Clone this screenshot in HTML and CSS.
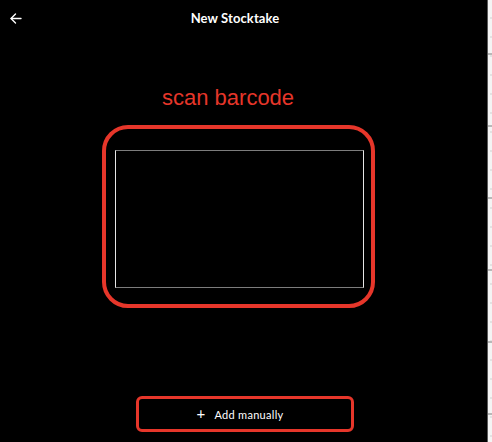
FILE: index.html
```html
<!DOCTYPE html>
<html lang="en">
<head>
  <meta charset="UTF-8" />
  <meta name="viewport" content="width=device-width, initial-scale=1.0"/>
  <title>New Stocktake</title>
  <link rel="stylesheet" href="styles.css">
</head>
<body>

  <div class="screen">
    <main class="app">
      <header class="topbar">
        <button class="back" aria-label="Back">
          <svg width="12" height="11" viewBox="0 0 12 11" fill="none" stroke="#fff" stroke-width="1.4" stroke-linecap="round" stroke-linejoin="round">
            <path d="M11 5.5H1.2"/>
            <path d="M5.5 1L1 5.5L5.5 10"/>
          </svg>
        </button>
        <h1>New Stocktake</h1>
      </header>

      <!-- Scanner -->
      <p class="scan-label">scan barcode</p>
      <div class="scan-frame">
        <div class="viewfinder"></div>
      </div>

      <button class="add-manual"><span class="plus">+</span> Add manually</button>
    </main>

    <div class="ruler"></div>
  </div>

</body>
</html>
```

FILE: styles.css
```css
:root {
  --bg: #000;
  --text: #fff;
  --red: #e6362a;
}

* {
  box-sizing: border-box;
}

body {
  margin: 0;
  background: var(--bg);
  color: var(--text);
  font-family: "Lato", "Open Sans", sans-serif;
}

.screen {
  display: flex;
  height: 442px;
  overflow: hidden;
}

.app {
  flex: 1;
  display: flex;
  flex-direction: column;
}

.topbar {
  height: 36px;
  display: flex;
  align-items: center;
  position: relative;
  padding: 0 17px 0 0;
}

.back {
  position: absolute;
  left: 9px;
  top: 11px;
  background: none;
  border: none;
  padding: 0;
  width: 14px;
  height: 14px;
  display: flex;
  align-items: center;
  justify-content: center;
}

.topbar h1 {
  flex: 1;
  margin: 0;
  text-align: center;
  font-size: 13px;
  font-weight: 700;
  letter-spacing: 0.1px;
}

.scan-label {
  margin: 50px 0 0 162px;
  font-family: "Liberation Sans", Arial, sans-serif;
  font-size: 22px;
  line-height: 24px;
  color: var(--red);
}

.scan-frame {
  margin: 15px 0 0 102px;
  width: 273px;
  height: 183px;
  border: 4px solid var(--red);
  border-radius: 26px;
  padding: 21px 0 0 9px;
}

.viewfinder {
  width: 249px;
  height: 138px;
  border: 1px solid #e6e6e6;
  border-top-color: #7d7d7d;
  border-bottom-color: #7d7d7d;
}

.add-manual {
  margin: 88px 0 0 136px;
  width: 218px;
  height: 36px;
  border: 3px solid var(--red);
  border-radius: 6px;
  background: none;
  color: var(--text);
  font-family: "Lato", "Open Sans", sans-serif;
  font-size: 11px;
  letter-spacing: 0.3px;
  padding: 0 10px 0 0;
  display: flex;
  align-items: center;
  justify-content: center;
  gap: 9px;
}

.plus {
  font-size: 15px;
  line-height: 1;
  margin-top: -2px;
}

.ruler {
  width: 5px;
  border-left: 1px solid #5a5a5a;
  background-color: #f4f4f4;
  background-image:
    repeating-linear-gradient(to bottom, transparent 0 53px, #b8b8b8 53px 55px, transparent 55px 72px),
    repeating-linear-gradient(to bottom, transparent 0 17px, #e2e2e2 17px 19px);
  background-size: 100% 100%, 60% 100%;
  background-repeat: no-repeat;
  background-position: 0 0, right 0;
}
```
